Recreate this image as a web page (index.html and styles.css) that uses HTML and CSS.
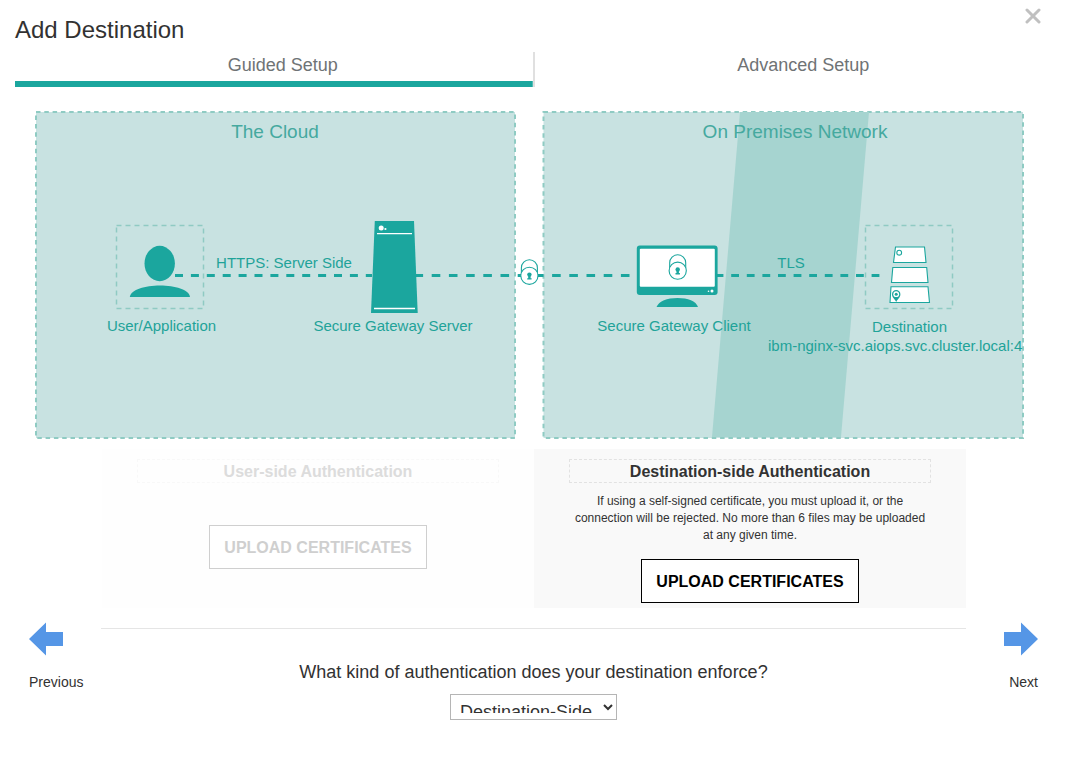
FILE: index.html
```html
<!DOCTYPE html>
<html lang="en">
<head>
<meta charset="utf-8">
<title>Add Destination</title>
<link rel="stylesheet" href="styles.css">
</head>
<body>
<main class="dialog">
  <button class="close" type="button" aria-label="Close">
    <svg width="16" height="16" viewBox="0 0 16 16"><path d="M2 2L14 14M14 2L2 14"/></svg>
  </button>
  <h1 class="title">Add Destination</h1>
  <nav class="tabs">
    <a class="tab tab-active" href="#guided">Guided Setup</a>
    <a class="tab" href="#advanced">Advanced Setup</a>
  </nav>

  <svg class="diagram" viewBox="15 111 1015 328" role="img" aria-label="Connection overview">
    <defs>
      <g id="lock">
        <path class="outline" d="M-8 0V-8A8 8 0 0 1 8 -8V0Z"/>
        <circle class="outline" r="8.6"/>
        <circle class="solid" cy="-1.2" r="2.2"/>
        <path class="solid" d="M-1.2 0H1.2V2.4H2.2V3.8H-2.2V2.4H-1.2Z"/>
      </g>
    </defs>
    <rect class="zone" x="36" y="112" width="479" height="326"/>
    <rect class="zone" x="543.5" y="112" width="479.5" height="326"/>
    <path class="band" d="M740 112H869L841 437H712Z"/>
    <text class="zone-title" x="275" y="138">The Cloud</text>
    <text class="zone-title" x="795" y="138">On Premises Network</text>

    <rect class="node-box" x="116.500" y="225.500" width="87" height="83"/>
    <rect class="node-box" x="865.500" y="225.500" width="87" height="83"/>

    <path class="link" stroke-dasharray="8 7.900" d="M175 275.500H372"/>
    <path class="link" stroke-dasharray="8.600 8.600" d="M414.500 275.500H630"/>
    <path class="link" stroke-dasharray="7.800 7.800" d="M715.600 275.500H880"/>

    <ellipse class="solid" cx="159.700" cy="263.500" rx="15.200" ry="17.700"/>
    <path class="solid" d="M129.800 297C131 289.500 145 285.600 160 285.600S189 289.500 190 297Z"/>

    <path class="solid" d="M374.800 221H414L417.700 313H371Z"/>
    <path class="white-line" d="M377 233.600H412M374 308.500H415"/>
    <circle class="white" cx="381.200" cy="227.900" r="2.500"/>
    <circle class="white" cx="385.400" cy="229" r="1.100"/>

    <use href="#lock" x="529.400" y="275.800"/>

    <rect class="solid" x="636.800" y="245.400" width="80.800" height="49.600" rx="3"/>
    <rect class="white" x="639.800" y="248.700" width="75" height="38" rx="1"/>
    <circle class="white" cx="712" cy="291" r="1.500"/>
    <circle class="white" cx="708.500" cy="291.200" r=".8"/>
    <path class="solid" d="M656.500 307C659 301 667 298 677.500 298S696 301 698 307Z"/>
    <use href="#lock" x="677.700" y="270.700"/>

    <path class="outline" d="M895.500 247H924.500L926 262.500H893.500ZM892.800 267.500H926.700L928 282.500H891.500ZM891 286.800H928L929.500 302.500H890Z"/>
    <circle class="outline" cx="899.200" cy="252.700" r="2.400"/>
    <path class="solid" d="M896.200 302C895 299 892 297.500 892 294.200A4.200 4.200 0 0 1 900.400 294.200C900.400 297.500 897.500 299 896.200 302Z"/>
    <circle class="white" cx="896.200" cy="294.200" r="2.900"/>
    <circle class="solid" cx="896.200" cy="294.200" r="1.500"/>

    <text class="label" x="284" y="268">HTTPS: Server Side</text>
    <text class="label" x="791" y="268">TLS</text>
    <text class="label" x="161.500" y="331">User/Application</text>
    <text class="label" x="393" y="331">Secure Gateway Server</text>
    <text class="label" x="674" y="331">Secure Gateway Client</text>
    <text class="label" x="909.500" y="332">Destination</text>
    <text class="label label-start" x="768" y="351">ibm-nginx-svc.aiops.svc.cluster.local:4</text>
  </svg>

  <div class="panels">
    <section class="panel panel-disabled">
      <h2 class="panel-title">User-side Authentication</h2>
      <button class="upload" type="button" disabled>UPLOAD CERTIFICATES</button>
    </section>
    <section class="panel">
      <h2 class="panel-title">Destination-side Authentication</h2>
      <p class="panel-text">If using a self-signed certificate, you must upload it, or the connection will be rejected. No more than 6 files may be uploaded at any given time.</p>
      <button class="upload" type="button">UPLOAD CERTIFICATES</button>
    </section>
  </div>

  <div class="footer">
    <button class="step" type="button">
      <svg width="34" height="34" viewBox="0 0 34 34"><path d="M0 17L17 0.500V10H34V24H17V33.500Z"/></svg>
      <span>Previous</span>
    </button>
    <div class="question">
      <label for="auth">What kind of authentication does your destination enforce?</label>
      <select id="auth" class="auth"><option>Destination-Side</option></select>
    </div>
    <button class="step step-next" type="button">
      <svg width="34" height="34" viewBox="0 0 34 34"><path d="M34 17L17 0.500V10H0V24H17V33.500Z"/></svg>
      <span>Next</span>
    </button>
  </div>
</main>
</body>
</html>
```
FILE: styles.css
```css
* { box-sizing: border-box; }
body {
  margin: 0;
  background: #fff;
  color: #323232;
  font-family: "Liberation Sans", Arial, sans-serif;
}
button { font-family: inherit; cursor: pointer; }
.dialog { position: relative; padding: 16px 15px; }
.close {
  position: absolute;
  top: 8px;
  right: 28px;
  padding: 0;
  border: 0;
  background: none;
}
.close svg { display: block; fill: none; stroke: #c0c0c0; stroke-width: 3; stroke-linecap: round; }
.title { margin: 0 0 8px; font-size: 24px; line-height: 28px; font-weight: 400; }
.tabs { display: grid; grid-template-columns: 1fr 1fr; height: 35px; }
.tab {
  padding-left: 18px;
  color: #6f7375;
  font-size: 18px;
  line-height: 26px;
  text-align: center;
  text-decoration: none;
}
.tab-active {
  border-right: 2px solid #e0e0e0;
  background: linear-gradient(#1ba69e, #1ba69e) bottom / 100% 6px no-repeat;
}
.diagram { display: block; width: calc(100% - 24px); height: auto; margin-top: 24px; }
.zone { fill: #c8e2e1; stroke: #8fcbc3; stroke-width: 2; stroke-dasharray: 4.5 3.8; }
.band { fill: #a6d4d0; }
.zone-title { fill: #45a99f; font-size: 19px; text-anchor: middle; }
.node-box { fill: none; stroke: #8fcac3; stroke-width: 1.5; stroke-dasharray: 5 4; }
.link { fill: none; stroke: #1ba69e; stroke-width: 3; }
.solid { fill: #1ba69e; }
.white { fill: #fff; }
.white-line { stroke: #fff; stroke-width: 1.3; }
.outline { fill: #fff; stroke: #1ba69e; stroke-width: 1.1; }
.label { fill: #1fa399; font-size: 15px; text-anchor: middle; }
.label-start { text-anchor: start; }

.panels { display: grid; grid-template-columns: 1fr 1fr; margin: 10px 88px 0 87px; }
.panel {
  display: flex;
  flex-direction: column;
  align-items: center;
  padding: 10px 35px 5px;
  background: #f9f9f9;
}
.panel-disabled { background: #fefefe; }
.panel-title {
  align-self: stretch;
  margin: 0;
  padding-top: 2px;
  border: 1px dashed #e2e2e2;
  font-size: 16px;
  line-height: 20px;
  text-align: center;
}
.panel-disabled .panel-title { border-color: #f8f8f8; color: #dcdcdc; }
.panel-text { margin: 10px 0 0; font-size: 12px; line-height: 17px; text-align: center; }
.upload {
  height: 44px;
  margin-top: 15px;
  padding: 2px 14px 0;
  border: 1px solid #000;
  background: #fff;
  color: #000;
  font-size: 16px;
  font-weight: 700;
}
.panel-disabled .upload { margin-top: 42px; border-color: #cfcfcf; color: #cfcfcf; }

.footer { display: flex; justify-content: space-between; margin: 14px 16px 0 14px; }
.step {
  display: flex;
  flex-direction: column;
  align-items: flex-start;
  align-self: flex-start;
  gap: 18px;
  width: 72px;
  padding: 0;
  border: 0;
  background: none;
  color: #323232;
  font-size: 14px;
  line-height: 17px;
}
.step svg { fill: #5596e6; }
.step-next { align-items: flex-end; }
.question {
  display: flex;
  flex: 1;
  flex-direction: column;
  align-items: center;
  gap: 11px;
  margin-top: 6px;
  padding-top: 32px;
  border-top: 1px solid #e5e5e5;
  font-size: 18px;
  line-height: 22px;
}
.auth {
  width: 167px;
  height: 26px;
  padding: 6px 5px;
  border: 1px solid #b5b5b5;
  border-radius: 0;
  background: #fff;
  color: #323232;
  font-family: inherit;
  font-size: 18px;
}
```
